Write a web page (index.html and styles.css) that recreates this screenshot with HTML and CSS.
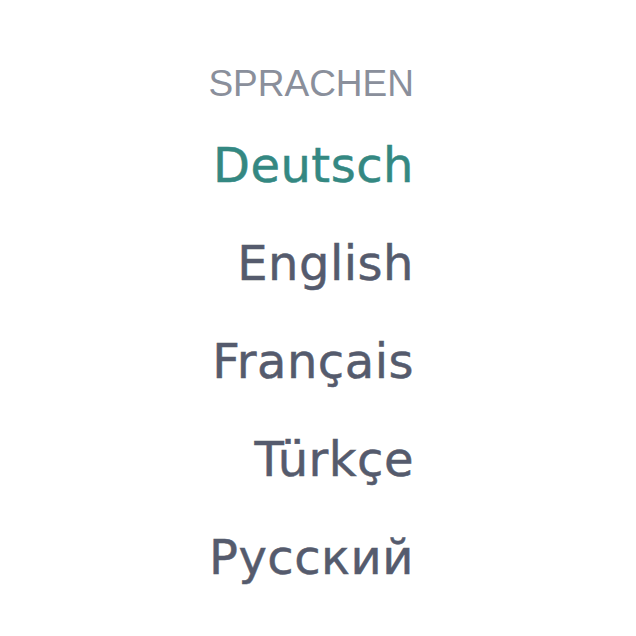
FILE: index.html
```html
<!DOCTYPE html>
<html lang="de">
<head>
  <meta charset="UTF-8">
  <title>Sprachen</title>
  <meta name="viewport" content="width=device-width, initial-scale=1.0">
  <link rel="stylesheet" href="styles.css">
</head>
<body>

  <nav class="lang-menu">
    <h3 class="lang-title">Sprachen</h3>
    <ul class="lang-list">
      <li><a href="#" class="active">Deutsch</a></li>
      <li><a href="#">English</a></li>
      <li><a href="#">Français</a></li>
      <li><a href="#">Türkçe</a></li>
      <li><a href="#">Русский</a></li>
    </ul>
  </nav>

</body>
</html>
```

FILE: styles.css
```css
:root {
  --text: #555b6d;
  --muted: #8a8f9b;
  --accent: #348882;
}

body {
  margin: 0;
  padding: 0;
  background-color: #fff;
}

.lang-menu {
  display: flex;
  flex-direction: column;
  align-items: flex-end;
  padding: 64px 222px 0 0;
}

.lang-title {
  margin: 0 0 12px;
  font-family: "Liberation Sans", Arial, sans-serif;
  font-size: 37px;
  line-height: 40px;
  font-weight: normal;
  text-transform: uppercase;
  color: var(--muted);
}

.lang-list {
  list-style: none;
  margin: 0;
  padding: 0;
  text-align: right;
}

.lang-list a {
  display: block;
  font-family: "DejaVu Sans", Verdana, sans-serif;
  font-size: 48px;
  line-height: 98px;
  letter-spacing: 0.5px;
  color: var(--text);
  -webkit-text-stroke: 0.5px currentColor;
  text-decoration: none;
}

.lang-list a.active {
  color: var(--accent);
}
```
